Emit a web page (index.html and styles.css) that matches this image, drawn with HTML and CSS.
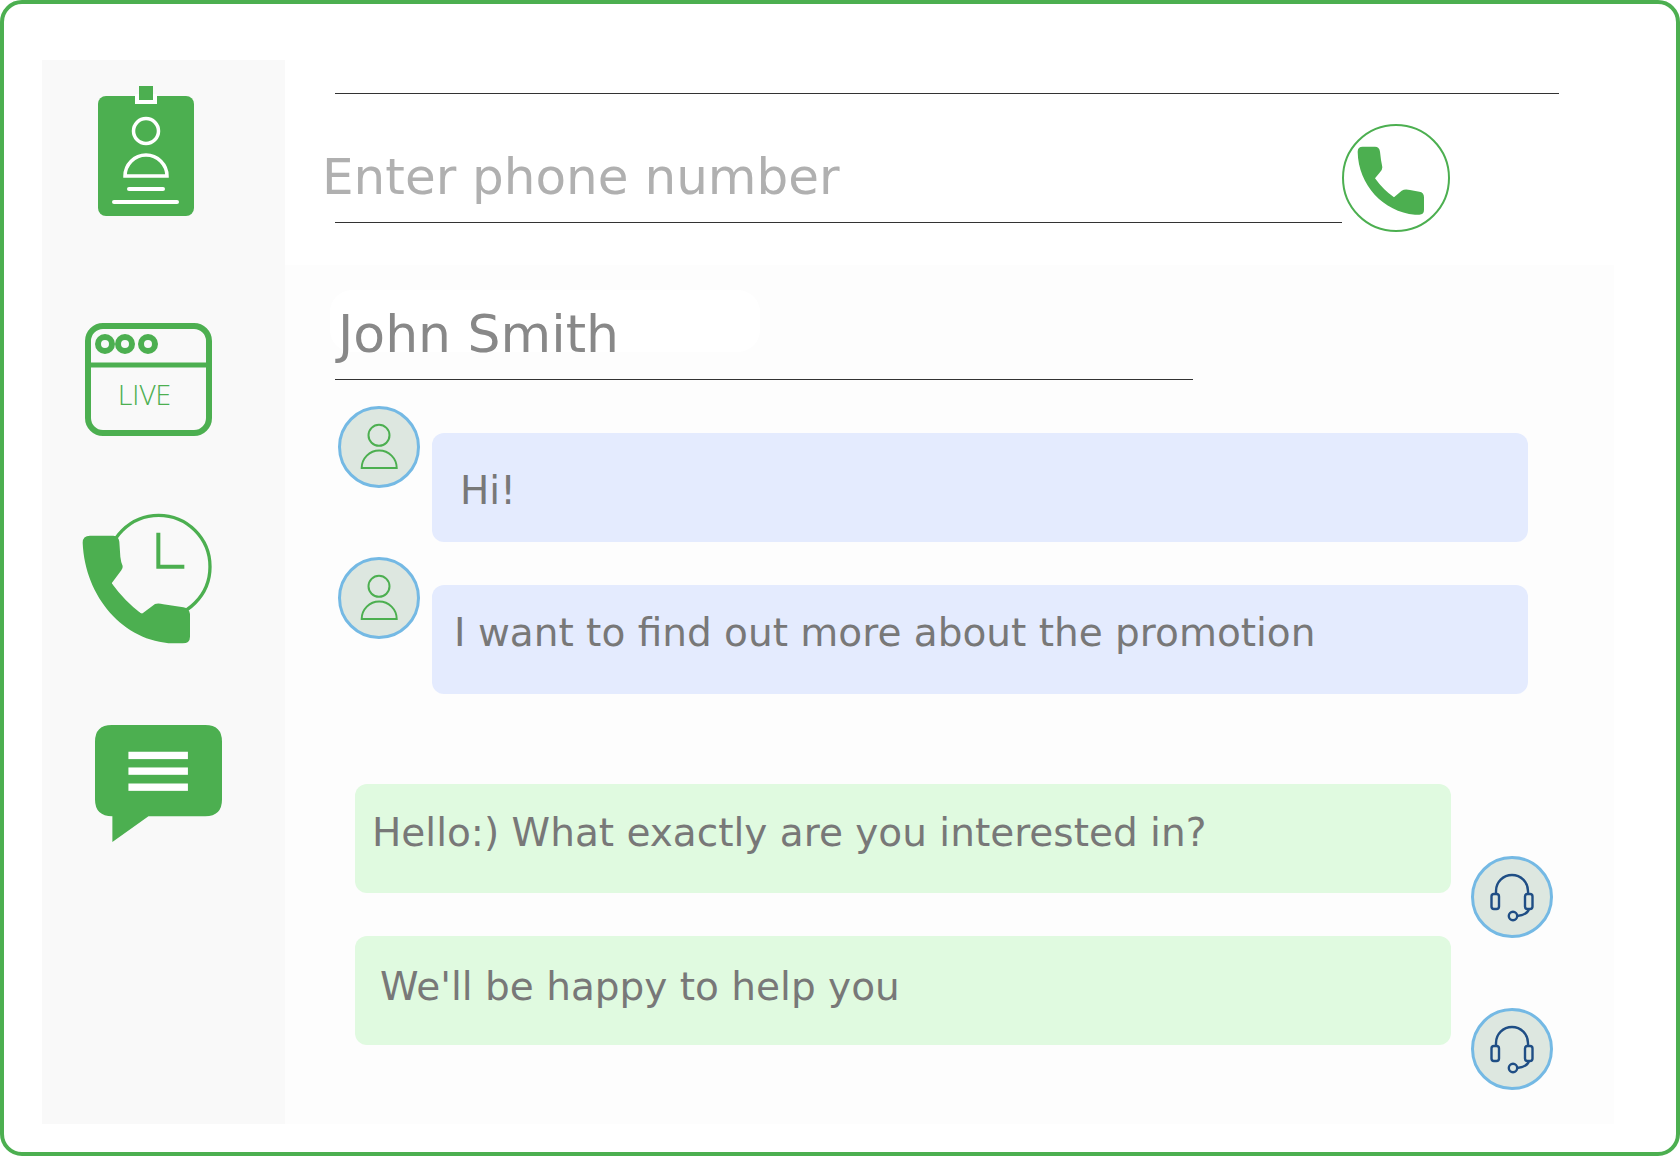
FILE: index.html
```html
<!DOCTYPE html>
<html lang="en">
<head>
  <meta charset="UTF-8" />
  <meta name="viewport" content="width=device-width, initial-scale=1.0"/>
  <title>Live Chat</title>
  <link rel="stylesheet" href="styles.css">
</head>
<body>

<div class="frame">

  <div class="sidebar">
    <svg class="icon-badge" viewBox="0 0 96 130">
      <rect y="10" width="96" height="120" rx="8" fill="#4caf50"/>
      <rect x="37" y="8" width="22" height="10" fill="#fff"/>
      <rect x="41" y="0" width="14" height="14" fill="#4caf50"/>
      <g fill="none" stroke="#fff" stroke-width="3.5">
        <circle cx="48" cy="45" r="12.5"/>
        <path d="M27 90 A21 21 0 0 1 69 90 Z"/>
      </g>
      <g stroke="#fff" stroke-width="4" stroke-linecap="round">
        <path d="M31 103 H65"/>
        <path d="M16 116 H79"/>
      </g>
    </svg>

    <svg class="icon-live" viewBox="84 322 129 115">
      <rect x="88" y="326" width="121" height="107" rx="15" fill="none" stroke="#4caf50" stroke-width="6"/>
      <path d="M88 365 H209" stroke="#4caf50" stroke-width="5"/>
      <g fill="none" stroke="#4caf50" stroke-width="6">
        <circle cx="105" cy="344" r="7"/>
        <circle cx="125" cy="344" r="7"/>
        <circle cx="148" cy="344" r="7"/>
      </g>
      <text class="live-text" x="144.500" y="405" text-anchor="middle">LIVE</text>
    </svg>

    <svg class="icon-history" viewBox="60 30 420 420">
      <circle cx="296" cy="200" r="154" fill="none" stroke="#4caf50" stroke-width="10"/>
      <path d="M295 98 V200 H373" fill="none" stroke="#4caf50" stroke-width="12"/>
      <path d="M68 128 Q68 107 90 107 H160 Q176 107 178 125 L181 170 Q183 188 188 198 Q189 205 184 211 L155 250 Q195 305 245 342 L285 312 Q295 308 310 313 L370 322 Q388 325 390 342 V410 Q390 430 368 430 H340 C190 425 75 290 68 128 Z" fill="#4caf50"/>
    </svg>

    <svg class="icon-chat" viewBox="75 45 380 350">
      <path d="M125 45 H405 Q455 45 455 95 V268 Q455 318 405 318 H235 L127 395 V318 Q75 318 75 268 V95 Q75 45 125 45 Z" fill="#4caf50"/>
      <g fill="#fff">
        <rect x="175" y="125" width="178" height="22"/>
        <rect x="175" y="172" width="178" height="22"/>
        <rect x="175" y="220" width="178" height="22"/>
      </g>
    </svg>
  </div>

  <div class="main">
    <div class="header">
      <div class="top-line"></div>
      <div class="phone-row">
        <div class="phone-field"><span class="phone-text">Enter phone number</span></div>
        <svg class="icon-call" viewBox="66 42 324 324">
          <circle cx="228" cy="204" r="159" fill="none" stroke="#4caf50" stroke-width="6"/>
          <path d="M113 125 Q113 110 128 110 H165 Q178 110 180 125 L183 150 Q186 165 187 172 Q187 180 180 187 L165 205 Q190 240 222 262 L245 242 Q255 236 270 240 L298 245 Q312 247 312 262 V300 Q312 314 298 314 H285 C190 305 115 225 113 125 Z" fill="#4caf50"/>
        </svg>
      </div>
    </div>

    <div class="panel">
      <div class="name">John Smith</div>
      <div class="name-line"></div>

      <div class="msg-row client-first">
        <div class="avatar">
          <svg viewBox="0 0 74 74">
            <g fill="none" stroke="#4caf50" stroke-width="2">
              <circle cx="37" cy="25.300" r="10.500"/>
              <path d="M19.700 58 A17.500 17.500 0 0 1 54.700 58 Z"/>
            </g>
          </svg>
        </div>
        <div class="bubble client hi">Hi!</div>
      </div>

      <div class="msg-row client-second">
        <div class="avatar">
          <svg viewBox="0 0 74 74">
            <g fill="none" stroke="#4caf50" stroke-width="2">
              <circle cx="37" cy="25.300" r="10.500"/>
              <path d="M19.700 58 A17.500 17.500 0 0 1 54.700 58 Z"/>
            </g>
          </svg>
        </div>
        <div class="bubble client promo">I want to find out more about the promotion</div>
      </div>

      <div class="agent-row agent-first">
        <div class="bubble agent hello">Hello:) What exactly are you interested in?</div>
        <div class="avatar agent-avatar">
          <svg viewBox="0 0 74 74">
            <g fill="none" stroke="#1f4e85" stroke-width="2.400">
              <path d="M21 34 V31 A16 16 0 0 1 53 31 V34"/>
              <rect x="16.500" y="34" width="7.500" height="15" rx="2.500"/>
              <rect x="50" y="34" width="7.500" height="15" rx="2.500"/>
              <circle cx="38" cy="56" r="4.200"/>
              <path d="M42 56 Q52 55 54 49"/>
            </g>
          </svg>
        </div>
      </div>

      <div class="agent-row">
        <div class="bubble agent help">We'll be happy to help you</div>
        <div class="avatar agent-avatar">
          <svg viewBox="0 0 74 74">
            <g fill="none" stroke="#1f4e85" stroke-width="2.400">
              <path d="M21 34 V31 A16 16 0 0 1 53 31 V34"/>
              <rect x="16.500" y="34" width="7.500" height="15" rx="2.500"/>
              <rect x="50" y="34" width="7.500" height="15" rx="2.500"/>
              <circle cx="38" cy="56" r="4.200"/>
              <path d="M42 56 Q52 55 54 49"/>
            </g>
          </svg>
        </div>
      </div>
    </div>
  </div>

</div>

</body>
</html>
```

FILE: styles.css
```css
* {
  box-sizing: border-box;
}

body {
  margin: 0;
  background-color: #fff;
  font-family: "DejaVu Sans", sans-serif;
}

svg {
  display: block;
}

.frame {
  width: 1680px;
  height: 1156px;
  display: flex;
  padding: 56px 0 28px 38px;
  background-color: #fff;
  border: 4px solid #4caf50;
  border-radius: 22px;
}

/* left column with the four icons */
.sidebar {
  width: 243px;
  background-color: #f9f9f9;
}

.icon-badge {
  width: 96px;
  height: 130px;
  margin: 26px 0 0 56px;
}

.icon-live {
  width: 129px;
  height: 115px;
  margin: 106px 0 0 42px;
}

.live-text {
  font-family: "Open Sans", sans-serif;
  font-weight: 300;
  font-size: 28px;
  fill: #4caf50;
}

.icon-history {
  width: 140px;
  height: 140px;
  margin: 73px 0 0 38px;
}

.icon-chat {
  width: 127px;
  height: 117px;
  margin: 75px 0 0 53px;
}

.main {
  width: 1329px;
  display: flex;
  flex-direction: column;
}

.header {
  height: 205px;
  padding: 33px 0 0 50px;
}

.top-line {
  width: 1224px;
  border-top: 1px solid #333;
}

.phone-row {
  display: flex;
  align-items: flex-start;
}

.phone-field {
  width: 1007px;
  height: 129px;
  padding-top: 53px;
  border-bottom: 1px solid #333;
}

.phone-text {
  display: block;
  margin-left: -13px;
  font-size: 50px;
  line-height: 60px;
  color: #b0b0b0;
}

.icon-call {
  width: 108px;
  height: 108px;
  margin-top: 30px;
}

/* conversation */
.panel {
  flex: 1;
  padding: 25px 0 0 45px;
  background-color: #fdfdfd;
}

.name {
  width: 430px;
  height: 62px;
  padding: 13px 0 0 8px;
  font-size: 52px;
  line-height: 62px;
  color: #888;
  background-color: #fff;
  border-radius: 22px;
}

.name-line {
  width: 858px;
  margin: 27px 0 0 5px;
  border-top: 1px solid #333;
}

.msg-row {
  display: flex;
  align-items: flex-start;
  gap: 12px;
  margin-left: 8px;
}

.client-first {
  margin-top: 26px;
}

.client-second {
  margin-top: 15px;
}

.agent-first {
  margin-top: 90px;
}

.agent-row {
  display: flex;
  align-items: flex-start;
  gap: 20px;
  height: 152px;
  margin-left: 25px;
}

.avatar {
  flex: none;
  display: flex;
  align-items: center;
  justify-content: center;
  width: 82px;
  height: 82px;
  background-color: #dde7e0;
  border: 3.5px solid #74b9e4;
  border-radius: 50%;
}

.avatar svg {
  flex: none;
  width: 74px;
  height: 74px;
}

.agent-avatar {
  margin-top: 72px;
}

.bubble {
  width: 1096px;
  height: 109px;
  font-size: 39px;
  line-height: 46px;
  color: #787878;
  border-radius: 12px;
}

.client {
  margin-top: 27px;
  background-color: #e4ebfe;
}

.agent {
  background-color: #e0fae0;
}

.hi {
  padding: 35px 0 0 28px;
}

.promo {
  margin-top: 28px;
  padding: 25px 0 0 22px;
}

.hello {
  padding: 26px 0 0 17px;
}

.help {
  padding: 28px 0 0 25px;
}
```
